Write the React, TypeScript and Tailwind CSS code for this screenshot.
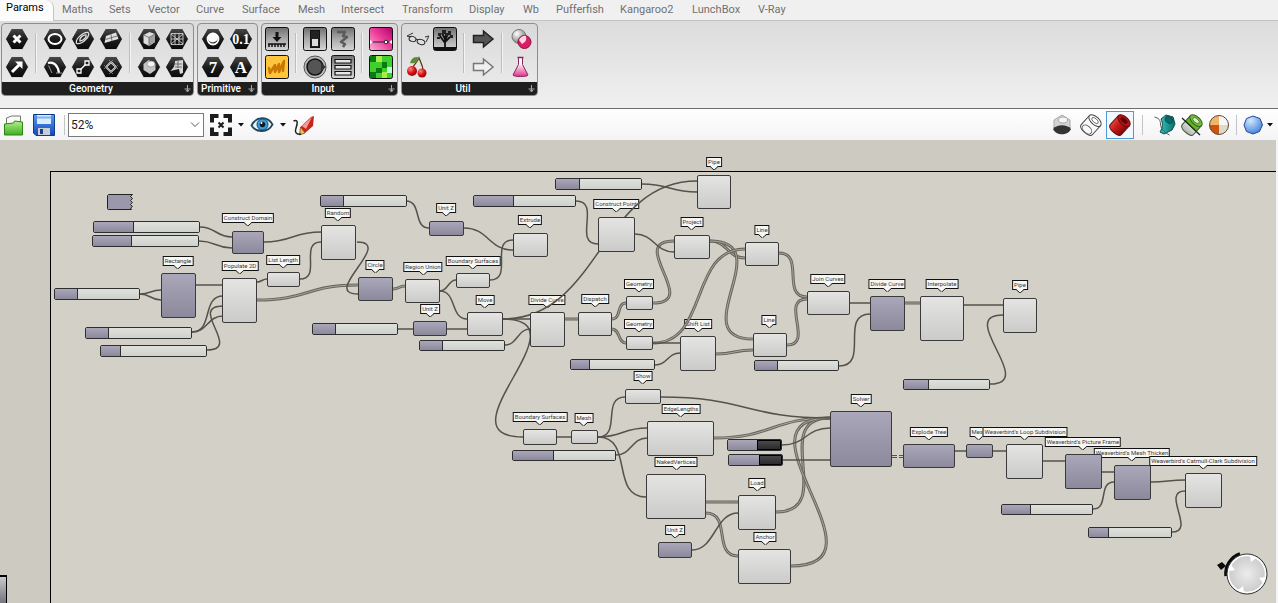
import React, { useState } from 'react';

type Tone = 'light' | 'dark';

interface INode {
  name: string;
  x: number;
  y: number;
  w: number;
  h: number;
  cx: number;
  labelY: number;
  tone?: Tone;
}

interface ISlider {
  x: number;
  y: number;
  w: number;
  h: number;
  name: number;
}

// world coordinates start above the canvas, this is the current pan
const PAN_Y = -140;

const nodes: INode[] = [
  { name: 'Construct Domain', x: 232, y: 231, w: 32, h: 23, cx: 248, labelY: 213, tone: 'dark' },
  { name: 'Rectangle', x: 161, y: 273, w: 35, h: 45, cx: 178, labelY: 256, tone: 'dark' },
  { name: 'Populate 2D', x: 222, y: 278, w: 35, h: 45, cx: 240, labelY: 261 },
  { name: 'List Length', x: 267, y: 272, w: 33, h: 15, cx: 283, labelY: 255 },
  { name: 'Random', x: 321, y: 225, w: 35, h: 35, cx: 338, labelY: 208 },
  { name: 'Unit Z', x: 429, y: 221, w: 35, h: 15, cx: 446, labelY: 203, tone: 'dark' },
  { name: 'Extrude', x: 513, y: 233, w: 35, h: 24, cx: 530, labelY: 215 },
  { name: 'Circle', x: 358, y: 277, w: 35, h: 24, cx: 375, labelY: 260, tone: 'dark' },
  { name: 'Region Union', x: 405, y: 279, w: 35, h: 24, cx: 423, labelY: 262 },
  { name: 'Boundary Surfaces', x: 456, y: 273, w: 34, h: 15, cx: 473, labelY: 256 },
  { name: 'Unit Z', x: 413, y: 321, w: 34, h: 15, cx: 430, labelY: 304, tone: 'dark' },
  { name: 'Move', x: 467, y: 312, w: 36, h: 24, cx: 485, labelY: 295 },
  { name: 'Divide Curve', x: 530, y: 312, w: 35, h: 35, cx: 547, labelY: 295 },
  { name: 'Pipe', x: 697, y: 175, w: 34, h: 34, cx: 714, labelY: 157 },
  { name: 'Construct Point', x: 598, y: 217, w: 37, h: 35, cx: 616, labelY: 199 },
  { name: 'Project', x: 674, y: 235, w: 36, h: 24, cx: 692, labelY: 217 },
  { name: 'Line', x: 745, y: 242, w: 34, h: 24, cx: 762, labelY: 225 },
  { name: 'Geometry', x: 626, y: 296, w: 27, h: 14, cx: 639, labelY: 279 },
  { name: 'Dispatch', x: 578, y: 312, w: 34, h: 24, cx: 595, labelY: 294 },
  { name: 'Geometry', x: 626, y: 336, w: 27, h: 14, cx: 639, labelY: 319 },
  { name: 'Shift List', x: 680, y: 336, w: 36, h: 35, cx: 698, labelY: 319 },
  { name: 'Line', x: 753, y: 333, w: 34, h: 24, cx: 769, labelY: 315 },
  { name: 'Join Curves', x: 807, y: 291, w: 43, h: 24, cx: 828, labelY: 274 },
  { name: 'Divide Curve', x: 870, y: 296, w: 35, h: 35, cx: 887, labelY: 279, tone: 'dark' },
  { name: 'Interpolate', x: 920, y: 296, w: 44, h: 45, cx: 942, labelY: 279 },
  { name: 'Pipe', x: 1003, y: 298, w: 34, h: 35, cx: 1020, labelY: 280 },
  { name: 'Boundary Surfaces', x: 523, y: 429, w: 34, h: 16, cx: 540, labelY: 412 },
  { name: 'Mesh', x: 571, y: 430, w: 27, h: 14, cx: 584, labelY: 413 },
  { name: 'Show', x: 625, y: 389, w: 36, h: 15, cx: 643, labelY: 371 },
  { name: 'EdgeLengths', x: 647, y: 421, w: 67, h: 35, cx: 681, labelY: 404 },
  { name: 'NakedVertices', x: 646, y: 474, w: 60, h: 45, cx: 676, labelY: 457 },
  { name: 'Load', x: 738, y: 495, w: 38, h: 35, cx: 757, labelY: 478 },
  { name: 'Unit Z', x: 658, y: 542, w: 34, h: 16, cx: 675, labelY: 525, tone: 'dark' },
  { name: 'Anchor', x: 738, y: 549, w: 53, h: 35, cx: 765, labelY: 532 },
  { name: 'Solver', x: 830, y: 411, w: 62, h: 56, cx: 861, labelY: 394, tone: 'dark' },
  { name: 'Explode Tree', x: 903, y: 444, w: 52, h: 24, cx: 929, labelY: 427, tone: 'dark' },
  { name: 'Mesh', x: 966, y: 444, w: 27, h: 14, cx: 979, labelY: 427, tone: 'dark' },
  { name: "Weaverbird's Loop Subdivision", x: 1006, y: 444, w: 37, h: 35, cx: 1025, labelY: 427 },
  { name: "Weaverbird's Picture Frame", x: 1065, y: 454, w: 37, h: 35, cx: 1083, labelY: 437, tone: 'dark' },
  { name: "Weaverbird's Mesh Thicken", x: 1114, y: 465, w: 37, h: 35, cx: 1132, labelY: 448, tone: 'dark' },
  { name: "Weaverbird's Catmull-Clark Subdivision", x: 1185, y: 473, w: 37, h: 35, cx: 1203, labelY: 456 },
];

const sliders: ISlider[] = [
  { x: 93, y: 221, w: 107, h: 12, name: 40 },
  { x: 92, y: 235, w: 107, h: 12, name: 39 },
  { x: 54, y: 288, w: 86, h: 12, name: 23 },
  { x: 85, y: 327, w: 107, h: 12, name: 23 },
  { x: 100, y: 345, w: 107, h: 12, name: 20 },
  { x: 320, y: 195, w: 87, h: 12, name: 23 },
  { x: 473, y: 195, w: 103, h: 12, name: 40 },
  { x: 312, y: 323, w: 86, h: 12, name: 23 },
  { x: 419, y: 340, w: 86, h: 11, name: 23 },
  { x: 555, y: 178, w: 87, h: 12, name: 24 },
  { x: 570, y: 359, w: 85, h: 11, name: 19 },
  { x: 754, y: 360, w: 85, h: 11, name: 23 },
  { x: 903, y: 379, w: 87, h: 11, name: 25 },
  { x: 512, y: 450, w: 104, h: 11, name: 41 },
  { x: 1001, y: 504, w: 92, h: 11, name: 29 },
  { x: 1088, y: 527, w: 84, h: 11, name: 20 },
];

const toggles: ISlider[] = [
  { x: 727, y: 439, w: 55, h: 12, name: 29 },
  { x: 728, y: 454, w: 55, h: 12, name: 30 },
];

// x1, y1, x2, y2 and, where a wire swings wide, the handle length
const wires: number[][] = [
  [200, 227, 232, 237], [199, 241, 232, 248], [264, 242, 321, 232],
  [140, 294, 161, 290], [140, 294, 161, 300], [196, 285, 223, 285],
  [257, 282, 267, 279], [192, 332, 223, 296], [192, 332, 223, 316],
  [207, 350, 223, 306, 36], [300, 279, 321, 242], [357, 242, 358, 294, 38],
  [406, 201, 429, 228], [464, 228, 513, 250], [490, 280, 513, 240],
  [440, 291, 456, 280], [440, 291, 467, 319], [398, 329, 413, 329],
  [447, 329, 467, 329], [503, 319, 530, 319], [503, 319, 697, 181],
  [503, 319, 523, 437, 86], [505, 345, 530, 329], [635, 234, 674, 252],
  [576, 201, 598, 244], [642, 184, 697, 192], [653, 343, 680, 343],
  [655, 365, 680, 353], [850, 303, 870, 303], [839, 366, 870, 314],
  [990, 384, 1003, 315, 48], [964, 305, 1003, 305], [557, 437, 571, 437],
  [598, 437, 625, 397], [598, 437, 647, 428], [598, 437, 646, 497],
  [616, 455, 647, 438], [661, 397, 830, 418], [782, 445, 830, 428],
  [783, 460, 830, 460], [692, 550, 738, 513], [955, 451, 966, 451],
  [993, 451, 1006, 451], [1043, 461, 1065, 461], [1102, 472, 1114, 472],
  [1093, 509, 1114, 482], [1151, 482, 1185, 480], [1172, 532, 1185, 491],
];

const doubleWires: number[][] = [
  [257, 300, 358, 285], [393, 289, 405, 286], [565, 319, 578, 319],
  [612, 319, 626, 303], [612, 329, 626, 343], [653, 303, 674, 241, 48],
  [710, 241, 745, 258], [710, 241, 753, 339, 70], [653, 343, 745, 249],
  [716, 354, 753, 350], [779, 253, 807, 297], [787, 345, 807, 299],
  [905, 303, 920, 303], [714, 438, 830, 418], [706, 502, 738, 502],
  [706, 513, 738, 556], [776, 512, 830, 418, 62], [791, 566, 830, 418, 104],
];

const wirePath = ([x1, y1, x2, y2, handle]: number[]) => {
  const h = handle ?? Math.max((x2 - x1) / 2, Math.abs(y2 - y1) * 0.6);
  return `M${x1},${y1} C${x1 + h},${y1} ${x2 - h},${y2} ${x2},${y2}`;
};

const tabs = [
  { name: 'Maths', size: 'w-[47px]' },
  { name: 'Sets', size: 'w-[39px]' },
  { name: 'Vector', size: 'w-[48px]' },
  { name: 'Curve', size: 'w-[46px]' },
  { name: 'Surface', size: 'w-[56px]' },
  { name: 'Mesh', size: 'w-[43px]' },
  { name: 'Intersect', size: 'w-[61px]' },
  { name: 'Transform', size: 'w-[67px]' },
  { name: 'Display', size: 'w-[54px]' },
  { name: 'Wb', size: 'w-[33px]' },
  { name: 'Pufferfish', size: 'w-[64px]' },
  { name: 'Kangaroo2', size: 'w-[72px]' },
  { name: 'LunchBox', size: 'w-[66px]' },
  { name: 'V-Ray', size: 'w-[46px]' },
];

const Defs = () => (
  <svg className="absolute h-0 w-0" aria-hidden="true">
    <defs>
      <linearGradient id="hex" x1="0" y1="0" x2="0" y2="1">
        <stop offset="0" stopColor="#4a4a4a" />
        <stop offset="0.5" stopColor="#1c1c1c" />
        <stop offset="1" stopColor="#0a0a0a" />
      </linearGradient>
      <linearGradient id="steel" x1="0" y1="0" x2="0" y2="1">
        <stop offset="0" stopColor="#6f6f6f" />
        <stop offset="0.5" stopColor="#a9a9a9" />
        <stop offset="1" stopColor="#d6d6d6" />
      </linearGradient>
      <linearGradient id="pink" x1="1" y1="0" x2="0" y2="1">
        <stop offset="0" stopColor="#b0006a" />
        <stop offset="0.5" stopColor="#f0409c" />
        <stop offset="1" stopColor="#fbb3d8" />
      </linearGradient>
      <linearGradient id="save" x1="0" y1="0" x2="0" y2="1">
        <stop offset="0" stopColor="#5a9cf0" />
        <stop offset="1" stopColor="#1547b8" />
      </linearGradient>
      <linearGradient id="folder" x1="0" y1="0" x2="0" y2="1">
        <stop offset="0" stopColor="#b2f08a" />
        <stop offset="1" stopColor="#3fae22" />
      </linearGradient>
      <linearGradient id="flask" x1="0" y1="0" x2="0" y2="1">
        <stop offset="0.3" stopColor="#ffffff" />
        <stop offset="1" stopColor="#e0328c" />
      </linearGradient>
      <linearGradient id="redPipe" x1="0" y1="0" x2="1" y2="0">
        <stop offset="0" stopColor="#e0443c" />
        <stop offset="0.4" stopColor="#c81a1a" />
        <stop offset="1" stopColor="#7d0a0a" />
      </linearGradient>
      <linearGradient id="tealPipe" x1="0" y1="0" x2="1" y2="0">
        <stop offset="0" stopColor="#36c0b8" />
        <stop offset="1" stopColor="#0b6f6c" />
      </linearGradient>
      <linearGradient id="greenPipe" x1="0" y1="0" x2="0" y2="1">
        <stop offset="0.5" stopColor="#5cb426" />
        <stop offset="0.55" stopColor="#d8d8d8" />
        <stop offset="1" stopColor="#b0b0b0" />
      </linearGradient>
      <radialGradient id="ball" cx="0.35" cy="0.3" r="0.8">
        <stop offset="0" stopColor="#ffffff" />
        <stop offset="1" stopColor="#6a6a6a" />
      </radialGradient>
      <radialGradient id="cherry" cx="0.35" cy="0.3" r="0.8">
        <stop offset="0" stopColor="#ff8a7a" />
        <stop offset="0.5" stopColor="#d8151a" />
        <stop offset="1" stopColor="#7a0408" />
      </radialGradient>
      <radialGradient id="sky" cx="0.35" cy="0.25" r="0.8">
        <stop offset="0" stopColor="#d3e8ff" />
        <stop offset="1" stopColor="#3f7fdc" />
      </radialGradient>
      <radialGradient id="dial">
        <stop offset="0" stopColor="#ececec" />
        <stop offset="1" stopColor="#c9c9c9" />
      </radialGradient>
    </defs>
  </svg>
);

const Hex = ({ children }: { children: React.ReactNode }) => (
  <svg viewBox="0 0 24 24" className="size-6">
    <path d="M6.500 1.500h11L23.500 12l-6 10.500h-11L.5 12z" fill="url(#hex)" stroke="#fafafa" strokeWidth="0.700" />
    {children}
  </svg>
);

const Tile = ({ fill, children }: { fill: string; children: React.ReactNode }) => (
  <svg viewBox="0 0 24 24" className="size-6">
    <rect x="0.500" y="0.500" width="23" height="23" rx="2" fill={fill} stroke="#111" />
    {children}
  </svg>
);

interface IIcon {
  label: string;
  icon: React.ReactNode;
}

const geometry: IIcon[][] = [
  [
    { label: 'Point', icon: <Hex><path d="M8.500 8.500l7 7m0-7l-7 7" stroke="#fff" strokeWidth="3" /></Hex> },
    { label: 'Vector', icon: <Hex><path d="M7 17l7-7" stroke="#fff" strokeWidth="3" /><path d="M10 6.500h7.500V14z" fill="#fff" /></Hex> },
  ],
  [
    { label: 'Circle', icon: <Hex><ellipse cx="12" cy="12" rx="6.500" ry="5" fill="none" stroke="#fff" strokeWidth="2" /></Hex> },
    { label: 'Circular Arc', icon: <Hex><path d="M5 8c6-2 10 3 11 10" fill="none" stroke="#fff" strokeWidth="2.200" /><path d="M5.500 10.500L9 18m4 0h6" stroke="#999" strokeWidth="1" /></Hex> },
    { label: 'Curve', icon: <Hex><path d="M5.500 16.500C4 12 12 5 17 5.500c3 2-4 12-11.500 11M9 14c-1-3 4-7 6-6 1 2-3 6-6 6z" fill="none" stroke="#ddd" strokeWidth="1.300" /></Hex> },
    { label: 'Line', icon: <Hex><path d="M8 16l8-8" stroke="#fff" strokeWidth="1.500" /><path d="M6 14h4v4H6zM14 6h4v4h-4z" fill="#222" stroke="#fff" strokeWidth="1.300" /></Hex> },
    { label: 'Plane', icon: <Hex><path d="M7 9l10-3.500 2.500 6.500-14 4z" fill="#e0e0e0" /><path d="M6.500 12.500L18 9M12 7.500l1 6.500" stroke="#555" strokeWidth="0.800" /></Hex> },
    { label: 'Rectangle', icon: <Hex><path d="M12 7l5 5-5 5-5-5z" fill="none" stroke="#ddd" strokeWidth="1.800" /><path d="M10 5l9 9M5 10l9 9M14 5l-9 9M19 10l-9 9" fill="none" stroke="#888" strokeWidth="0.800" /></Hex> },
  ],
  [
    { label: 'Box', icon: <Hex><path d="M6.500 8l6-3 5.500 2v8l-6 4-5.500-3z" fill="#ddd" /><path d="M12 10.500L18 7v8l-6 4z" fill="#a2a2a2" /><path d="M6.500 8l5.500 2.500L18 7m-6 3.500V19" stroke="#555" strokeWidth="0.700" fill="none" /></Hex> },
    { label: 'Brep', icon: <Hex><path d="M6.500 9l5-4 7 4v6l-5.500 4-6.500-4z" fill="#c4c4c4" /><ellipse cx="14" cy="9" rx="4" ry="3" fill="#f4f4f4" stroke="#888" strokeWidth="0.700" /></Hex> },
    { label: 'Mesh', icon: <Hex><path d="M6 6.500h12v11H6zM10 6.500v11m4-11v11M6 12h12M6 7l12 10M18 7L6 17" fill="none" stroke="#ccc" strokeWidth="0.900" /></Hex> },
    { label: 'Surface', icon: <Hex><path d="M10 6l8-1v13l-3 1-1-5-9 2c3-2 5-5 5-10z" fill="#d6d6d6" /><path d="M10 9h7m-7 3h7m-4-6v7" stroke="#555" strokeWidth="0.800" /></Hex> },
  ],
];

const glyph = 'Liberation Serif, serif';

const primitive: IIcon[][] = [
  [
    { label: 'Boolean', icon: <Hex><circle cx="12" cy="12" r="5.500" fill="#1c1c1c" stroke="#fff" strokeWidth="1.800" /><path d="M8 14a5 5 0 0 1 7-7 5.500 5.500 0 0 1 1.500 6c-3 3-6 3-8.500 1z" fill="#fff" /></Hex> },
    { label: 'Integer', icon: <Hex><text x="12" y="18" textAnchor="middle" fontFamily={glyph} fontWeight="700" fontSize="17" fill="#fff">7</text></Hex> },
    { label: 'Number', icon: <Hex><text x="12" y="17" textAnchor="middle" fontFamily={glyph} fontWeight="700" fontSize="14" fill="#fff">0.1</text></Hex> },
    { label: 'Text', icon: <Hex><text x="12" y="18" textAnchor="middle" fontFamily={glyph} fontWeight="700" fontSize="17" fill="#fff">A</text></Hex> },
  ],
];

const input: IIcon[][] = [
  [
    { label: 'Number Slider', icon: <Tile fill="url(#steel)"><path d="M10.500 5h3v5h3L12 15 7.500 10h3z" fill="#111" /><path d="M3 17h18M4 17v3m3-3v3m3-3v3m3-3v3m3-3v3m3-3v3" stroke="#111" strokeWidth="1.500" /></Tile> },
    { label: 'Panel', icon: <Tile fill="#ffc63d"><path d="M4 13l1 5 5-8v7l4-8v8l5-11-1 10" fill="none" stroke="#c97800" strokeWidth="2.500" strokeLinejoin="round" strokeLinecap="round" /></Tile> },
  ],
  [
    { label: 'Boolean Toggle', icon: <Tile fill="url(#steel)"><rect x="7.500" y="3.500" width="9" height="17" fill="#222" stroke="#111" /><rect x="9" y="12" width="6" height="7" fill="#ddd" /></Tile> },
    { label: 'Control Knob', icon: <svg viewBox="0 0 24 24" className="size-6"><circle cx="12" cy="12" r="11" fill="#bbb" stroke="#555" /><circle cx="12" cy="12" r="8" fill="#555" stroke="#111" strokeWidth="1.500" /><path d="M18 8l5 4-5 4z" fill="#333" /></svg> },
    { label: 'MD Slider', icon: <Tile fill="url(#steel)"><path d="M6 5h8l-2 4 4 1-6 5 4 2-2 3" fill="none" stroke="#5a5a5a" strokeWidth="2.500" strokeLinejoin="round" /></Tile> },
    { label: 'Value List', icon: <Tile fill="url(#steel)"><path d="M4 4.500h16v3.500H4zM4 10.500h16V14H4zM4 16.500h16V20H4z" fill="#e6e6e6" stroke="#111" strokeWidth="1.200" /></Tile> },
  ],
  [
    { label: 'Gradient', icon: <Tile fill="url(#pink)"><path d="M1 15h22" stroke="#222" strokeWidth="1.200" /><path d="M1 13v4l3-2zM23 13v4l-3-2z" fill="#fff" /><circle cx="17" cy="15" r="1.800" fill="#fff" stroke="#222" /></Tile> },
    { label: 'Image Sampler', icon: <Tile fill="#3fd02c"><path d="M1 1h6v6H1zM13 7h5v6h-5zM7 13h6v5H7zM1 17h6v6H1z" fill="#0b7a14" /><path d="M7 1h6v6H7zM13 17h5v6h-5z" fill="#a6f046" /><path d="M18 12h5v6h-5z" fill="#b9ffd0" /></Tile> },
  ],
];

const util: IIcon[][] = [
  [
    { label: 'Glasses', icon: <svg viewBox="0 0 24 24" className="size-6" fill="none" stroke="#222"><path d="M8 6L2 9l4 1m15 5l3-6-4 1" strokeWidth="0.900" /><ellipse cx="7.500" cy="12" rx="3.500" ry="2.500" transform="rotate(20 7.500 12)" /><ellipse cx="16" cy="15" rx="4" ry="2.500" transform="rotate(20 16 15)" /><path d="M11 12l2 1" /></svg> },
    { label: 'Cherry Picker', icon: <svg viewBox="0 0 24 24" className="size-6"><path d="M7 14C9 9 13 6 14 3c2 5 4 8 4 12" fill="none" stroke="#5a3a10" strokeWidth="1.300" /><path d="M14 3c-4-3-8 1-9 5 4 1 8-1 9-5z" fill="#5c8c3c" /><circle cx="7" cy="16" r="5" fill="url(#cherry)" /><circle cx="17" cy="18" r="4.500" fill="url(#cherry)" /></svg> },
    { label: 'Galapagos', icon: <Tile fill="url(#steel)"><path d="M1 20h22v3H1z" fill="#111" /><path d="M12 21V9m0 6l5-5m-5 6L7 9m5 4l3-6M12 12L9 6" stroke="#111" strokeWidth="1.800" fill="none" /><path d="M5 6h3v3H5zM9 3h4v4H9zM15 4h3v4h-3zM17 8h3v3h-3zM4 10h3v2H4zM12 6h3v3h-3z" fill="#222" /></Tile> },
  ],
  [
    { label: 'Data Input', icon: <svg viewBox="0 0 24 24" className="size-6"><path d="M2.500 8.500h10V4L22 12l-9.500 8v-4.500h-10z" fill="#555" stroke="#222" strokeWidth="1.500" /></svg> },
    { label: 'Data Output', icon: <svg viewBox="0 0 24 24" className="size-6"><path d="M2.500 8.500h10V4L22 12l-9.500 8v-4.500h-10z" fill="#f0f0f0" stroke="#777" strokeWidth="1.500" /></svg> },
  ],
  [
    { label: 'Cluster', icon: <svg viewBox="0 0 24 24" className="size-6"><circle cx="10" cy="9.500" r="7" fill="url(#ball)" stroke="#777" /><circle cx="15.500" cy="15" r="6.500" fill="#d81e64" stroke="#8c0e3e" /><path d="M10 13a6 6 0 0 1 7-4 7 7 0 0 1-4 8z" fill="#fbd5e3" /></svg> },
    { label: 'Flask', icon: <svg viewBox="0 0 24 24" className="size-6"><path d="M9.500 2.500v7L4 20c0 2 15 2 15 0L13.500 9.500v-7z" fill="url(#flask)" stroke="#8c2458" /><path d="M8.500 2.500h6" stroke="#8c2458" strokeWidth="1.500" /></svg> },
  ],
];

const RibbonPanel = ({ title, groups }: { title: string; groups: IIcon[][] }) => (
  <section className="overflow-hidden rounded border border-[#8d8d8d] bg-gradient-to-b from-[#d9d9d9] to-[#ececec]">
    <div className="flex py-px pr-0.5 pl-px">
      {groups.map((group, i) => (
        <React.Fragment key={i}>
          {i > 0 && <span className="mx-1 my-2 w-0.5 border-l border-[#bdbdbd] bg-[#f4f4f4]" />}
          <div className="grid grid-flow-col grid-rows-2">
            {group.map((item) => (
              <button key={item.label} type="button" aria-label={item.label} className="flex size-7 items-center justify-center">
                {item.icon}
              </button>
            ))}
          </div>
        </React.Fragment>
      ))}
    </div>
    <div className="flex h-[13px] items-center bg-[#1f1f1f] pr-0.5 text-[10px] leading-3 font-medium text-white">
      <h2 className="flex-1 pr-1 text-center">{title}</h2>
      <svg viewBox="0 0 7 8" className="h-2 w-[7px]">
        <path d="M3.500 0v6M.5 4h6M2 5l1.500 2L5 5" stroke="#aaa" fill="none" />
      </svg>
    </div>
  </section>
);

const Caret = () => (
  <svg viewBox="0 0 6 4" className="h-1 w-1.5"><path d="M0 0h6L3 3.500z" fill="#111" /></svg>
);

const Separator = () => <span className="h-5 w-px bg-[#c4c4c4]" />;

const ToolButton = ({ label, className = '', children }: { label: string; className?: string; children: React.ReactNode }) => (
  <button type="button" aria-label={label} className={`flex items-center justify-center ${className}`}>
    {children}
  </button>
);

// cylinder leaning to the right, open end on top
const Pipe = ({ body, rim, hole, line }: { body: string; rim: string; hole: string; line: string }) => (
  <g transform="rotate(42 12 12)">
    <path d="M4.500 6v12c0 5 15 5 15 0V6z" fill={body} stroke={line} />
    <ellipse cx="12" cy="6" rx="7.500" ry="4" fill={rim} stroke={line} />
    <ellipse cx="12" cy="6" rx="4" ry="2" fill={hole} stroke={line} strokeWidth="0.700" />
  </g>
);

const Toolbar = ({ zoom, setZoom }: { zoom: string; setZoom: (z: string) => void }) => (
  <div className="flex h-8 items-center border-t border-[#6e6e6e] bg-gradient-to-b from-white to-[#f4f4f6]">
    <ToolButton label="Open" className="ml-1 w-5">
      <svg viewBox="0 0 20 24" className="h-6 w-5">
        <path d="M2.500 11V5l5-2h9v14h-14z" fill="#fafafa" stroke="#6b7d62" />
        <path d="M.5 11l9-1 1-2 8 1v13H.5z" fill="url(#folder)" stroke="#2c8418" />
      </svg>
    </ToolButton>
    <ToolButton label="Save" className="mx-2 w-6">
      <svg viewBox="0 0 24 24" className="size-6">
        <path d="M1.500 1.500h21v21H4l-2.500-2.500z" fill="url(#save)" stroke="#123a8e" />
        <path d="M5 2h14v9H5z" fill="#d9ecff" />
        <path d="M5 4.500h14" stroke="#7fb3ec" strokeWidth="2" />
        <path d="M6 15h12v7H6z" fill="#c9cdd4" />
        <path d="M8 16h3v5H8z" fill="#1a3f96" />
      </svg>
    </ToolButton>
    <Separator />
    <div className="relative ml-[3px] w-34">
      <select
        aria-label="Zoom"
        value={zoom}
        onChange={(e) => setZoom(e.target.value)}
        className="h-6 w-full appearance-none border border-[#7a7a7a] bg-white pl-0.5 text-[12px] text-[#222]"
      >
        <option>52%</option>
        <option>100%</option>
        <option>200%</option>
      </select>
      <svg viewBox="0 0 10 6" className="pointer-events-none absolute top-2.5 right-1 h-1.5 w-2.5">
        <path d="M1 .5l4 4 4-4" fill="none" stroke="#555" />
      </svg>
    </div>
    <ToolButton label="Zoom extents" className="mx-[5px] w-6">
      <svg viewBox="0 0 24 24" className="size-6">
        <path d="M3 9.500V3h6.500m5 0H21v6.500m0 5V21h-6.500m-5 0H3v-6.500" fill="none" stroke="#1c1c1c" strokeWidth="4" />
        <path d="M9.500 9.500l5 5m0-5l-5 5" stroke="#1c1c1c" strokeWidth="2" />
      </svg>
    </ToolButton>
    <Caret />
    <ToolButton label="Named views" className="mx-1.5 w-6">
      <svg viewBox="0 0 24 24" className="size-6">
        <path d="M1.500 12.500C6 3 18 3 22.500 11.500 18 20 6 20 1.500 12.500z" fill="#e8f4fa" stroke="#24495c" strokeWidth="1.800" />
        <circle cx="12.500" cy="11.500" r="5.500" fill="#3c9fd8" stroke="#12456a" />
        <circle cx="12.500" cy="11.500" r="2.800" fill="#0c1a24" />
        <circle cx="11.500" cy="10" r="1" fill="#fff" />
      </svg>
    </ToolButton>
    <Caret />
    <ToolButton label="Sketch" className="ml-1.5 w-6">
      <svg viewBox="0 0 24 24" className="size-6">
        <path d="M8.500 14L19 4l3-1-1 10-8 7z" fill="#c8241e" />
        <path d="M10 13L20 4l-6 12z" fill="#f59a94" />
        <path d="M8.500 14l4.500 6-5.500 2z" fill="#edc05a" stroke="#6a3a12" strokeWidth="0.700" />
        <path d="M1.500 8c5-2 4 3 2.500 7s0 7 5 6" fill="none" stroke="#222" strokeWidth="1.500" />
      </svg>
    </ToolButton>
    <div className="flex-1" />
    <ToolButton label="No preview" className="w-7">
      <svg viewBox="0 0 24 24" className="size-6">
        <path d="M4 7l8-5 8 5v8l-8 5-8-5z" fill="#d4d4d4" stroke="#aaa" />
        <ellipse cx="13" cy="7" rx="4.500" ry="3" fill="#f6f6f6" stroke="#aaa" />
        <path d="M3 16c4-5 14-5 18 0-3 7-15 7-18 0z" fill="#333" />
      </svg>
    </ToolButton>
    <ToolButton label="Wireframe preview" className="mx-px w-7">
      <svg viewBox="0 0 24 24" className="size-6">
        <Pipe body="#fafafa" rim="#fafafa" hole="#fff" line="#444" />
        <ellipse cx="12" cy="18" rx="5.500" ry="3.500" transform="rotate(42 12 12)" fill="none" stroke="#666" />
      </svg>
    </ToolButton>
    <ToolButton label="Shaded preview" className="h-7 w-7 border border-[#4a9bd8] bg-[#f2f8fd]">
      <svg viewBox="0 0 24 24" className="size-6">
        <Pipe body="url(#redPipe)" rim="#b81616" hole="#5e0606" line="#6e0808" />
      </svg>
    </ToolButton>
    <span className="w-2" />
    <Separator />
    <ToolButton label="Selected only" className="ml-2 w-7">
      <svg viewBox="0 0 24 24" className="size-6">
        <path d="M8 6l5-4 7 2 2 7-3 6-8 4-4-2c3-5 3-9 1-13z" fill="url(#tealPipe)" stroke="#0a4a4a" />
        <ellipse cx="16" cy="7" rx="4" ry="2.800" transform="rotate(35 16 7)" fill="#0a6a68" stroke="#075250" />
        <path d="M1.500 4c4 1 6 3 6 7s3 8 9 11" fill="none" stroke="#555" />
      </svg>
    </ToolButton>
    <ToolButton label="Document preview" className="-mx-px w-7">
      <svg viewBox="0 0 24 24" className="size-6">
        <Pipe body="url(#greenPipe)" rim="#6cc434" hole="#d6f2bc" line="#3c5a2a" />
        <path d="M2 5l18 17" stroke="#222" strokeWidth="1.300" />
      </svg>
    </ToolButton>
    <ToolButton label="Preview quality" className="w-7">
      <svg viewBox="0 0 24 24" className="size-6">
        <path d="M12 2.500A9.500 9.500 0 0 0 2.500 12H12z" fill="#f2b46a" />
        <path d="M12 21.500A9.500 9.500 0 0 1 2.500 12H12z" fill="#c8560f" />
        <path d="M12 2.500a9.500 9.500 0 0 1 9.500 9.500H12z" fill="#f6f6f6" />
        <path d="M12 21.500a9.500 9.500 0 0 0 9.500-9.500H12z" fill="#e2d8c8" />
        <circle cx="12" cy="12" r="9.500" fill="none" stroke="#5c4a3a" />
      </svg>
    </ToolButton>
    <span className="w-[3px]" />
    <Separator />
    <ToolButton label="Mesh settings" className="ml-0.5 w-7">
      <svg viewBox="0 0 24 24" className="size-6">
        <path d="M12 3l7 2.500 2.500 6.500-3 6.500L12 21l-6.500-2.500L3 12l2.500-6.500z" fill="url(#sky)" stroke="#274a8c" />
      </svg>
    </ToolButton>
    <Caret />
    <span className="w-[5px]" />
  </div>
);

const NodeLabel = ({ node }: { node: INode }) => (
  <div
    className="absolute h-2.5 -translate-x-1/2 border border-[#111] bg-[#f6f6f4] px-px text-[6px] leading-2 whitespace-nowrap text-[#3a3a3a]"
    style={{ left: node.cx, top: node.labelY + PAN_Y }}
  >
    {node.name}
    <svg viewBox="0 0 8 4" className="absolute top-2 left-1/2 h-1 w-2 -translate-x-1/2">
      <path d="M0 0h8L4 4z" fill="#f6f6f4" />
      <path d="M0 .5L4 4l4-3.500" fill="none" stroke="#222" />
    </svg>
  </div>
);

const Canvas = () => {
  const light = 'bg-gradient-to-b from-[#e4e4e3] to-[#cbcbca]';
  const dark = 'bg-gradient-to-b from-[#a9a7b9] to-[#8b899b]';

  return (
    <main className="relative flex-1 overflow-hidden border-r-2 border-[#f4f4f4] bg-[#cdcac2]">
      <div className="mt-[31px] ml-[50px] h-full border-t border-l border-black bg-[#d3d0c8]" />

      {nodes.map((node, i) => (
        <NodeLabel key={i} node={node} />
      ))}

      <svg className="absolute inset-0 h-full w-full" fill="none">
        <g transform={`translate(0 ${PAN_Y})`}>
          {doubleWires.map((wire, i) => (
            <g key={i}>
              <path d={wirePath(wire)} stroke="#67645c" strokeWidth="3" />
              <path d={wirePath(wire)} stroke="#aaa79f" strokeWidth="1" />
            </g>
          ))}
          {wires.map((wire, i) => (
            <path key={i} d={wirePath(wire)} stroke="#55524b" strokeWidth="1.500" />
          ))}
          <path d="M892 455.500h11M892 457.500h11" stroke="#55524b" strokeDasharray="5 2" />
          <path d="M108.500 194.500h24l-2 2 2 2-2 2 2 2-2 2 2 2-2 1.500 1 1.500h-23q-1 0-1-1v-13z" fill="#9a98aa" stroke="#222" />
        </g>
      </svg>

      {nodes.map((node, i) => (
        <div
          key={i}
          className={`absolute rounded-xs border border-[#3a3a3a] ${node.tone === 'dark' ? dark : light}`}
          style={{ left: node.x, top: node.y + PAN_Y, width: node.w, height: node.h }}
        />
      ))}

      {sliders.map((slider, i) => (
        <div
          key={i}
          className="absolute flex overflow-hidden rounded-xs border border-[#2e2e2e]"
          style={{ left: slider.x, top: slider.y + PAN_Y, width: slider.w, height: slider.h }}
        >
          <span className={`shrink-0 border-r border-[#2e2e2e] ${dark}`} style={{ width: slider.name }} />
          <input
            type="range"
            aria-label={`Number slider ${i + 1}`}
            className="h-full min-w-0 flex-1 appearance-none bg-gradient-to-b from-[#dfe1dd] to-[#cfd1cd] [&::-webkit-slider-thumb]:w-0 [&::-webkit-slider-thumb]:appearance-none"
          />
        </div>
      ))}

      {toggles.map((toggle, i) => (
        <div
          key={i}
          className="absolute flex overflow-hidden rounded-xs border border-[#2e2e2e]"
          style={{ left: toggle.x, top: toggle.y + PAN_Y, width: toggle.w, height: toggle.h }}
        >
          <span className={`shrink-0 ${dark}`} style={{ width: toggle.name }} />
          <button
            type="button"
            aria-label={`Boolean toggle ${i + 1}`}
            className="flex-1 border border-black bg-gradient-to-b from-[#4a484a] to-[#2c2b2d]"
          />
        </div>
      ))}

      <div className="absolute bottom-0 left-0 h-7 w-[7px] border-t-2 border-r border-black bg-gradient-to-b from-[#c9c8cb] to-[#77757d]" />

      <svg viewBox="0 0 54 46" className="absolute right-[7px] bottom-2 h-[46px] w-[54px]">
        <path d="M11 27A21 21 0 0 1 25 5" fill="none" stroke="#0a0a0a" strokeWidth="3.500" />
        <path d="M2 16l5-3 4 4-5 4z" fill="#0a0a0a" />
        <circle cx="32" cy="25" r="20" fill="url(#dial)" stroke="#333" />
        <circle cx="32" cy="25" r="18.500" fill="none" stroke="#fff" strokeWidth="1.500" />
        <path d="M35 7l6 2-5 4zM50 28l-2 6-4-5zM29 43l-6-2 5-4zM14 22l2-6 4 5z" fill="#fff" />
      </svg>
    </main>
  );
};

const App = () => {
  const [zoom, setZoom] = useState('52%');

  return (
    <div className="flex h-screen flex-col overflow-hidden bg-[#f0f0f0] font-[Roboto,sans-serif]">
      <Defs />
      <nav className="flex h-[21px] shrink-0 border-b border-[#c3c3c3] text-[11px] text-[#707070]">
        <button type="button" className="h-[21px] w-[54px] rounded-tr-lg border-r border-[#c3c3c3] bg-[#fcfcfc] pb-1 pl-1.5 text-left text-black">
          Params
        </button>
        <div className="flex pl-2">
          {tabs.map((tab) => (
            <button key={tab.name} type="button" className={`${tab.size} text-left`}>
              {tab.name}
            </button>
          ))}
        </div>
      </nav>

      <div className="flex shrink-0 items-start gap-[3px] bg-gradient-to-b from-[#dcdcdc] to-[#f0f0f0] px-px pt-0.5 pb-3">
        <RibbonPanel title="Geometry" groups={geometry} />
        <RibbonPanel title="Primitive" groups={primitive} />
        <RibbonPanel title="Input" groups={input} />
        <RibbonPanel title="Util" groups={util} />
      </div>

      <Toolbar zoom={zoom} setZoom={setZoom} />
      <Canvas />
    </div>
  );
};

export default App;
